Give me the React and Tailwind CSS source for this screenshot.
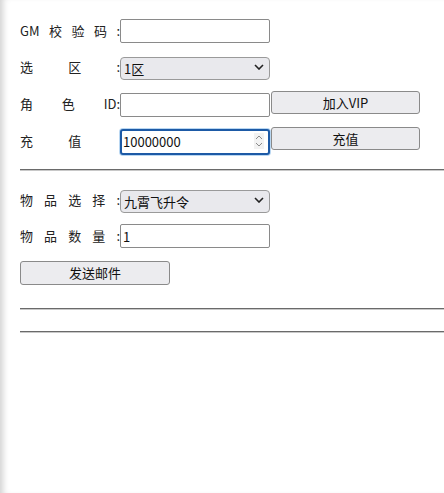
import { useState } from "react";

const font = { fontFamily: '"Microsoft YaHei", "Noto Sans CJK SC", sans-serif' };

// label spread across 100px, like the justified form labels
const Label = ({ parts }) => (
  <div className="w-[100px] flex justify-between items-center text-[13px] text-[#222]">
    {parts.map((p, i) => (
      <span key={i} className={p === "_" ? "invisible" : ""}>
        {p === "_" ? ":" : p}
      </span>
    ))}
  </div>
);

const inputCls =
  "w-[150px] h-[24px] border border-[#8a8a8a] rounded-[2px] bg-white px-[2px] text-[13px] text-[#111] outline-none";

const btnCls =
  "w-[149px] h-[23px] border border-[#8a8a8a] rounded-[3px] bg-[#ececef] text-[13px] text-[#111]";

const Chevron = () => (
  <svg width="10" height="6" viewBox="0 0 10 6" className="absolute right-[6px] top-[9px] pointer-events-none">
    <path d="M1 1l4 4 4-4" fill="none" stroke="#222" strokeWidth="1.6" />
  </svg>
);

const Select = ({ value, options }) => (
  <div className="relative w-[150px] h-[23px]">
    <select
      defaultValue={value}
      className="appearance-none w-full h-full border border-[#9a9a9a] rounded-[4px] bg-[#e9e9ed] pl-[3px] text-[13px] text-[#111] outline-none"
    >
      {options.map((o) => (
        <option key={o}>{o}</option>
      ))}
    </select>
    <Chevron />
  </div>
);

const Hr = () => <div className="h-[2px] bg-[#6a6a6a] border-b border-[#c8c8c8]" />;

export default function App() {
  const [amount, setAmount] = useState("10000000");
  const [count, setCount] = useState("1");

  return (
    <div
      className="min-h-[493px] bg-white pl-[20px] pt-[19px] shadow-[inset_7px_0_6px_-4px_rgba(0,0,0,0.18)]"
      style={font}
    >
      <div className="flex items-center h-[24px]">
        <Label parts={["GM", "校", "验", "码", ":"]} />
        <input className={inputCls} />
      </div>

      <div className="flex items-center h-[23px] mt-[12px]">
        <Label parts={["选", "区", ":"]} />
        <Select value="1区" options={["1区", "2区", "3区"]} />
      </div>

      <div className="flex items-start h-[25px] mt-[13px]">
        <div className="h-[25px] flex items-center">
          <Label parts={["角", "色", "ID:"]} />
        </div>
        <input className={inputCls + " mt-[2px]"} />
        <button className={btnCls + " ml-[1px]"}>加入VIP</button>
      </div>

      <div className="flex items-start h-[26px] mt-[12px]">
        <div className="h-[26px] flex items-center">
          <Label parts={["充", "值", "_"]} />
        </div>
        <div className="relative">
          <input
            value={amount}
            onChange={(e) => setAmount(e.target.value)}
            className="w-[150px] h-[26px] border-2 border-[#1d5aa6] rounded-[3px] bg-white px-[1px] text-[13px] text-[#111] outline-none shadow-[0_0_0_1px_#b9d7f2]"
          />
          <svg width="10" height="16" viewBox="0 0 10 16" className="absolute right-[6px] top-[5px]">
            <rect x="0" y="0" width="10" height="16" fill="#f2f2f2" />
            <path d="M2 6l3-3 3 3M2 10l3 3 3-3" fill="none" stroke="#8a8a8a" strokeWidth="1" />
          </svg>
        </div>
        <button className={btnCls + " ml-[1px] mt-[-1px]"}>充值</button>
      </div>

      <div className="mt-[15px]">
        <Hr />
      </div>

      <div className="flex items-center h-[23px] mt-[17px]">
        <Label parts={["物", "品", "选", "择", ":"]} />
        <Select value="九霄飞升令" options={["九霄飞升令", "仙灵丹", "元宝礼包"]} />
      </div>

      <div className="flex items-center h-[24px] mt-[13px]">
        <Label parts={["物", "品", "数", "量", ":"]} />
        <input value={count} onChange={(e) => setCount(e.target.value)} className={inputCls} />
      </div>

      <button className="w-[150px] h-[24px] mt-[13px] border border-[#8a8a8a] rounded-[3px] bg-[#ececef] text-[13px] text-[#111] block">
        发送邮件
      </button>

      <div className="mt-[23px]">
        <Hr />
      </div>
      <div className="mt-[21px]">
        <Hr />
      </div>
    </div>
  );
}
